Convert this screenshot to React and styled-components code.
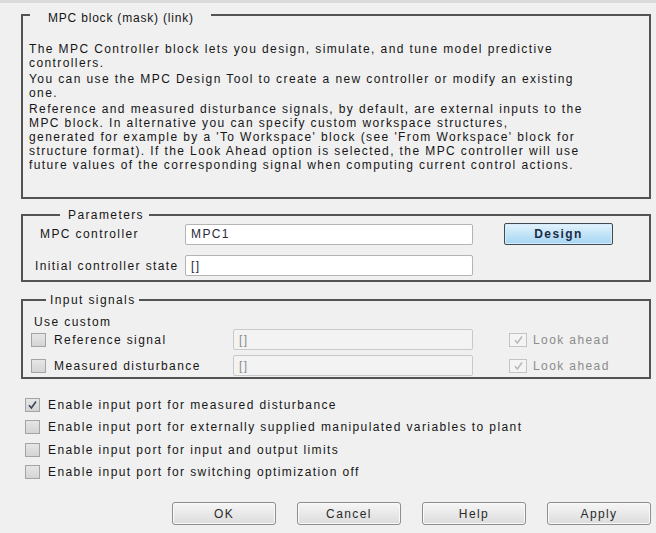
import React from 'react';
import styled, { createGlobalStyle } from 'styled-components';

const GlobalStyle = createGlobalStyle`
  html, body {
    margin: 0;
    padding: 0;
    background: #f0f0f0;
  }
  body {
    font-family: "Liberation Sans", Arial, sans-serif;
    font-size: 12px;
    letter-spacing: 1.4px;
    color: #161616;
  }
`;

const Page = styled.div`
  width: 656px;
  height: 533px;
  box-sizing: border-box;
  border-top: 3px solid #dadada;
  padding: 2px 0 0 21px;
  background: #f0f0f0;
  overflow: hidden;
`;

const Frame = styled.fieldset`
  box-sizing: border-box;
  width: 630px;
  height: ${p => p.$height}px;
  margin: ${p => p.$top}px 0 0;
  padding: 0;
  min-width: 0;
  border: 2px solid #535353;
`;

const Legend = styled.legend`
  margin-left: ${p => p.$offset}px;
  padding: ${p => p.$pad};
  line-height: 14px;
  letter-spacing: ${p => p.$spacing || 1.4}px;
  color: #161616;
`;

const Description = styled.div`
  padding: 17px 0 0 6px;
  white-space: nowrap;
`;

const Para = styled.p`
  margin: 0 0 2px;
  line-height: 14px;
`;

const ParamRow = styled.div`
  display: flex;
  align-items: center;
  margin-top: ${p => p.$top}px;
`;

const ParamLabel = styled.div`
  box-sizing: border-box;
  width: 162px;
  padding-left: ${p => p.$indent}px;
  white-space: nowrap;
`;

const TextField = styled.div`
  box-sizing: border-box;
  width: ${p => p.$width}px;
  height: 21px;
  padding-left: 5px;
  display: flex;
  align-items: center;
  background: ${p => (p.$disabled ? '#f3f3f3' : '#ffffff')};
  border: 1px solid ${p => (p.$disabled ? '#c9c9c9' : '#b4b4b4')};
  border-radius: 2px;
  color: ${p => (p.$disabled ? '#8c8c8c' : '#2a2a3a')};
`;

const DesignButton = styled.div`
  box-sizing: border-box;
  width: 109px;
  height: 22px;
  margin-left: 31px;
  display: flex;
  align-items: center;
  justify-content: center;
  border: 1px solid #3f4a55;
  border-radius: 2px;
  box-shadow: inset 0 0 0 1px #d6ecfa;
  background: linear-gradient(#e4f3fd, #c2e4f8 50%, #a6d6f3);
  font-weight: bold;
  color: #1b2c45;
`;

const UseCustom = styled.div`
  padding: 9px 0 0 11px;
  line-height: 12px;
`;

const SignalRow = styled.div`
  display: grid;
  grid-template-columns: 202px 240px auto;
  align-items: center;
  padding-left: 8px;
  margin-top: ${p => p.$top}px;
`;

const LookAhead = styled.div`
  margin-left: 36px;
`;

const CheckLabel = styled.label`
  display: flex;
  align-items: center;
  gap: ${p => p.$gap || 8}px;
  color: ${p => (p.$muted ? '#8b8b8b' : '#161616')};
  white-space: nowrap;
`;

const Box = styled.span`
  box-sizing: border-box;
  width: ${p => p.$w || 15}px;
  height: 14px;
  flex: none;
  display: flex;
  align-items: center;
  justify-content: center;
  border: 1px solid ${p => (p.$muted ? '#c4c4c4' : '#a4a4a4')};
  background: ${p => (p.$muted ? '#f4f4f4' : 'linear-gradient(#e6e6e6, #d4d4d4)')};
`;

const Options = styled.div`
  margin-top: 15px;
  padding-left: 4px;
  display: flex;
  flex-direction: column;
`;

const OptionRow = styled.div`
  height: 22.3px;
  display: flex;
  align-items: center;
`;

const ButtonBar = styled.div`
  width: 630px;
  margin-top: 19px;
  display: flex;
  justify-content: flex-end;
  gap: 21px;
`;

const Button = styled.div`
  box-sizing: border-box;
  width: 104px;
  height: 23px;
  display: flex;
  align-items: center;
  justify-content: center;
  border: 1px solid #8e8e8e;
  border-radius: 3px;
  box-shadow: inset 0 0 0 1px #fafafa;
  background: linear-gradient(#f6f6f6, #e9e9e9 50%, #dcdcdc);
  color: #2a2a2a;
`;

const Tick = ({ color = '#3a4656' }) => (
  <svg width="11" height="10" viewBox="0 0 11 10">
    <path d="M2 5.2 L4.4 8 L9 1.5" fill="none" stroke={color} strokeWidth="1.6" />
  </svg>
);

const Check = ({ checked, muted, w, children, gap }) => (
  <CheckLabel $muted={muted} $gap={gap}>
    <Box $muted={muted} $w={w}>{checked && <Tick color={muted ? '#b9b9b9' : '#3a4656'} />}</Box>
    {children}
  </CheckLabel>
);

export default function App() {
  return (
    <>
      <GlobalStyle />
      <Page>
        <Frame $height={194} $top={0}>
          <Legend $offset={7} $pad="6px 17px 0 18px" $spacing={0.8}>MPC block (mask) (link)</Legend>
          <Description>
            <Para>
              The MPC Controller block lets you design, simulate, and tune model predictive<br />
              controllers.
            </Para>
            <Para>
              You can use the MPC Design Tool to create a new controller or modify an existing<br />
              one.
            </Para>
            <Para>
              Reference and measured disturbance signals, by default, are external inputs to the<br />
              MPC block. In alternative you can specify custom workspace structures,<br />
              generated for example by a 'To Workspace' block (see 'From Workspace' block for<br />
              structure format). If the Look Ahead option is selected, the MPC controller will use<br />
              future values of the corresponding signal when computing current control actions.
            </Para>
          </Description>
        </Frame>

        <Frame $height={74} $top={9}>
          <Legend $offset={37} $pad="0 5px 0 8px">Parameters</Legend>
          <ParamRow $top={1}>
            <ParamLabel $indent={17}>MPC controller</ParamLabel>
            <TextField $width={288}>MPC1</TextField>
            <DesignButton>Design</DesignButton>
          </ParamRow>
          <ParamRow $top={10}>
            <ParamLabel $indent={12}>Initial controller state</ParamLabel>
            <TextField $width={288}>[]</TextField>
          </ParamRow>
        </Frame>

        <Frame $height={86} $top={11}>
          <Legend $offset={23} $pad="0 3px 0 4px">Input signals</Legend>
          <UseCustom>Use custom</UseCustom>
          <SignalRow $top={1}>
            <Check>Reference signal</Check>
            <TextField $width={240} $disabled>[]</TextField>
            <LookAhead><Check muted checked w={18} gap={6}>Look ahead</Check></LookAhead>
          </SignalRow>
          <SignalRow $top={5}>
            <Check>Measured disturbance</Check>
            <TextField $width={240} $disabled>[]</TextField>
            <LookAhead><Check muted checked w={18} gap={6}>Look ahead</Check></LookAhead>
          </SignalRow>
        </Frame>

        <Options>
          <OptionRow><Check checked>Enable input port for measured disturbance</Check></OptionRow>
          <OptionRow><Check>Enable input port for externally supplied manipulated variables to plant</Check></OptionRow>
          <OptionRow><Check>Enable input port for input and output limits</Check></OptionRow>
          <OptionRow><Check>Enable input port for switching optimization off</Check></OptionRow>
        </Options>

        <ButtonBar>
          <Button>OK</Button>
          <Button>Cancel</Button>
          <Button>Help</Button>
          <Button>Apply</Button>
        </ButtonBar>
      </Page>
    </>
  );
}
